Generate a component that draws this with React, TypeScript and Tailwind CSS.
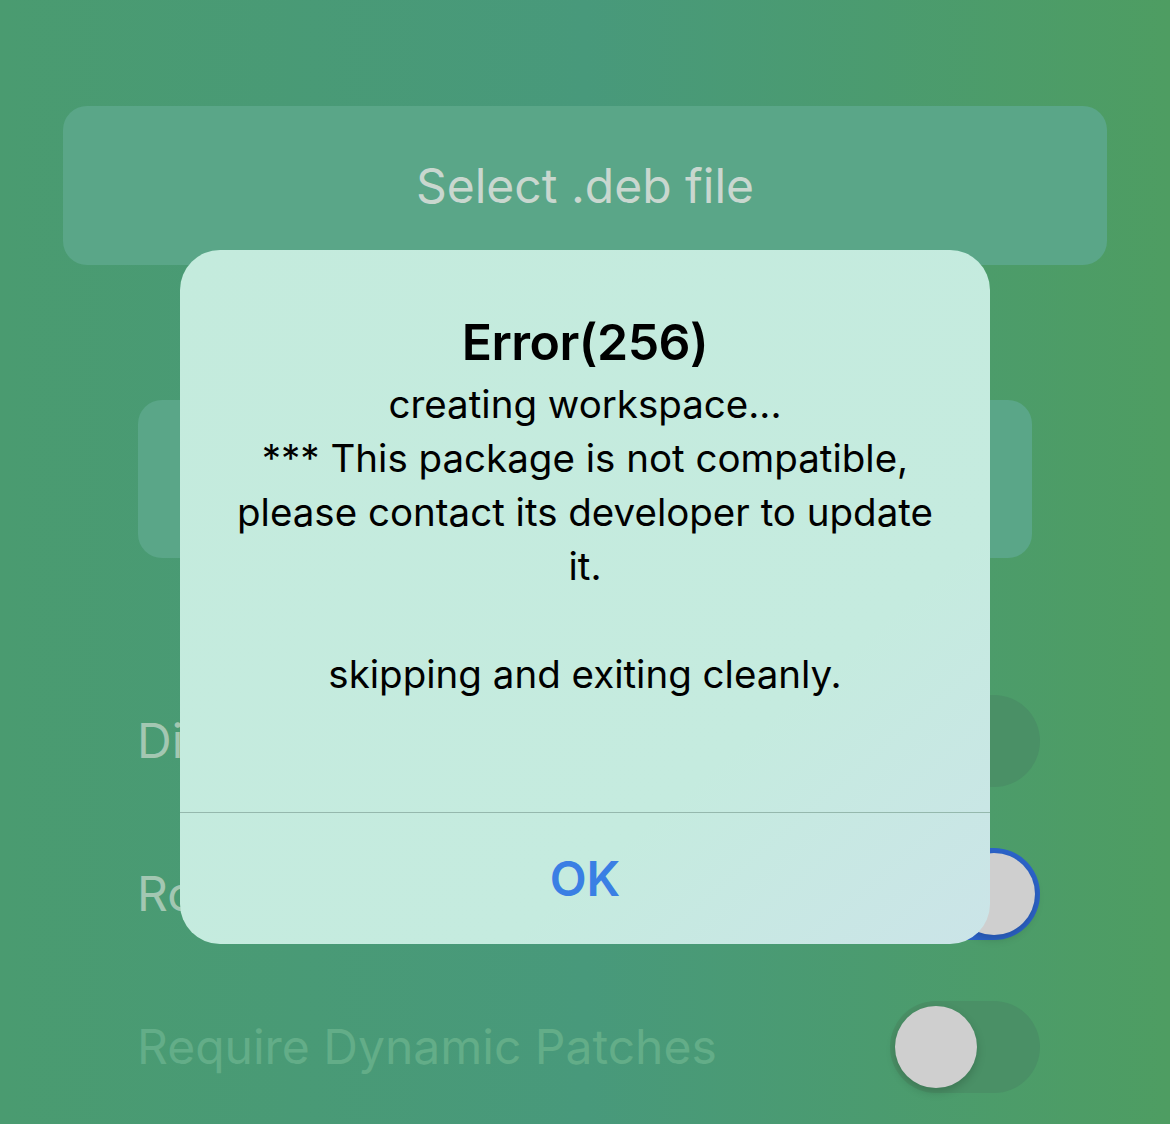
import React from "react";

const FONT = { fontFamily: "Inter, 'Noto Sans', sans-serif" };

type ToggleProps = { on?: boolean };

function Toggle({ on = false }: ToggleProps) {
  return (
    <div
      className={`flex h-[92px] w-[150px] shrink-0 items-center rounded-full px-[5px] ${
        on ? "justify-end bg-[#2c63c9]" : "justify-start bg-[#4a9066]"
      }`}
    >
      <div className="h-[82px] w-[82px] rounded-full bg-[#cfcfcf] shadow-[0_4px_10px_rgba(0,0,0,0.18)]" />
    </div>
  );
}

function SettingRow({ label, on, faded }: { label: string; on?: boolean; faded?: boolean }) {
  return (
    <div className="flex h-[153px] items-center justify-between pl-[137px] pr-[130px]">
      <span className={`text-[48px] font-normal ${faded ? "text-[#63ad88]" : "text-[#a3c7b2]"}`}>
        {label}
      </span>
      <Toggle on={on} />
    </div>
  );
}

const MESSAGE = [
  "creating workspace...",
  "*** This package is not compatible,",
  "please contact its developer to update",
  "it.",
  "",
  "skipping and exiting cleanly.",
];

export default function App() {
  return (
    <div
      className="relative h-[1124px] w-[1170px] overflow-hidden bg-gradient-to-r from-[#4a9b70] via-[#48997b] to-[#4e9d62]"
      style={FONT}
    >
      {/* background screen (dimmed) */}
      <div className="px-[63px] pt-[106px]">
        <div className="flex h-[159px] items-center justify-center rounded-[24px] bg-[#5aa688]">
          <span className="text-[48px] text-[#c9d7cf]">Select .deb file</span>
        </div>
        <div className="mx-[75px] mt-[135px] h-[158px] rounded-[24px] bg-[#5aa688]" />
      </div>

      <div className="mt-[106px]">
        <SettingRow label="Disable Tweak Injection" />
        <SettingRow label="Root Helper" on />
        <SettingRow label="Require Dynamic Patches" faded />
      </div>

      {/* alert */}
      <div className="absolute left-[180px] top-[250px] flex h-[694px] w-[810px] flex-col overflow-hidden rounded-[40px] bg-gradient-to-br from-[#c4ebdd] via-[#c5ebdf] via-70% to-[#cbe4e8]">
        <div className="flex flex-1 flex-col items-center px-8 pt-[64px] text-center text-black">
          <h2 className="text-[50px] font-semibold leading-[56px] tracking-[-0.5px]">Error(256)</h2>
          <div className="mt-[7px] text-[38.5px] leading-[54px]">
            {MESSAGE.map((line, i) => (
              <p key={i} className="h-[54px]">
                {line}
              </p>
            ))}
          </div>
        </div>
        <div className="h-px bg-[#95b8ad]" />
        <button className="flex h-[131px] items-center justify-center text-[48px] font-semibold text-[#3a7fe4]">
          OK
        </button>
      </div>
    </div>
  );
}
